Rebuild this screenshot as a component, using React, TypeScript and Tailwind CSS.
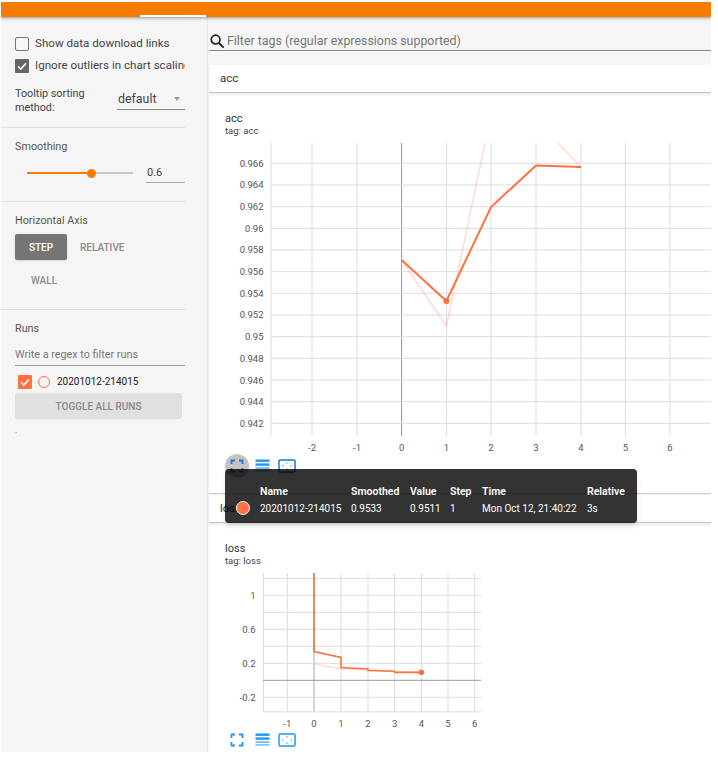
import React from 'react';

const RED = '#ff7043';

const CheckMark = () => (
  <svg viewBox="0 0 14 14" className="w-[14px] h-[14px]">
    <path d="M3 7.2 L5.8 10 L11 4.2" fill="none" stroke="#fff" strokeWidth="1.6" />
  </svg>
);

const SearchIcon = () => (
  <svg viewBox="0 0 16 16" className="w-[16px] h-[16px] shrink-0">
    <circle cx="6.6" cy="6.6" r="4.4" fill="none" stroke="#222" strokeWidth="1.7" />
    <path d="M10 10 L14.6 14.6" stroke="#222" strokeWidth="2" />
  </svg>
);

const ChartIcons = ({ hover }: { hover?: boolean }) => (
  <div className="flex items-center h-[24px] pl-[16px] gap-[6px]">
    <div className={`w-[24px] h-[24px] rounded-full flex items-center justify-center ${hover ? 'bg-[#c4c4c4]' : ''}`}>
      <svg viewBox="0 0 14 14" className="w-[14px] h-[14px]">
        <path d="M1.5 5 V1.5 H5 M9 1.5 H12.5 V5 M12.5 9 V12.5 H9 M5 12.5 H1.5 V9" fill="none" stroke={hover ? '#1976d2' : '#2196f3'} strokeWidth="1.8" />
      </svg>
    </div>
    <svg viewBox="0 0 15 14" className="w-[15px] h-[14px]">
      <rect x="0.5" y="0.5" width="14" height="2.4" fill="#2196f3" />
      <rect x="0.5" y="4.4" width="14" height="2.4" fill="#2196f3" />
      <rect x="0.5" y="8.3" width="14" height="1.6" fill="#64b5f6" />
      <rect x="0.5" y="11.2" width="14" height="1.4" fill="#64b5f6" />
    </svg>
    <svg viewBox="0 0 18 14" className="w-[18px] h-[14px] ml-[2px]">
      <rect x="1" y="1" width="16" height="12" rx="1" fill="none" stroke={hover ? '#1976d2' : '#2196f3'} strokeWidth="1.5" />
      <path d="M9 3.2 V4.6 M9 9.4 V10.8 M4 7 H5.4 M12.6 7 H14" stroke="#2196f3" strokeWidth="1.1" />
    </svg>
  </div>
);

const AccChart = () => {
  const xs = [
    [312, '-2'], [357, '-1'], [401.6, '0'], [446.4, '1'], [491, '2'],
    [536, '3'], [581, '4'], [625.5, '5'], [670, '6'],
  ] as [number, string][];
  const ys = ['0.966', '0.964', '0.962', '0.96', '0.958', '0.956', '0.954', '0.952', '0.95', '0.948', '0.946', '0.944', '0.942'];
  return (
    <svg viewBox="209 140 502 314" className="block w-[502px] h-[314px]">
      <line x1="271" y1="143" x2="271" y2="436" stroke="#ddd" />
      {xs.map(([x, t]) => (
        <g key={t}>
          <line x1={x} y1="143" x2={x} y2="436" stroke={t === '0' ? '#999' : '#ddd'} />
          <text x={x} y="451" fontSize="9.5" fill="#555" textAnchor="middle">{t}</text>
        </g>
      ))}
      {ys.map((t, i) => {
        const y = 163.3 + i * 21.67;
        return (
          <g key={t}>
            <line x1="271" y1={y} x2="711" y2={y} stroke="#ddd" />
            <text x="263.5" y={y + 3.5} fontSize="9.5" fill="#555" textAnchor="end">{t}</text>
          </g>
        );
      })}
      <polyline points="401.6,260 446.4,326 485,143" fill="none" stroke={RED} strokeOpacity="0.25" strokeWidth="1.5" />
      <polyline points="558,143 581,167" fill="none" stroke={RED} strokeOpacity="0.25" strokeWidth="1.5" />
      <polyline points="401.6,260 446.4,301 491,207 536,165.5 581,167" fill="none" stroke={RED} strokeWidth="2" />
      <circle cx="446.4" cy="301" r="3" fill={RED} />
    </svg>
  );
};

const LossChart = () => {
  const xs = [
    [287.3, '-1'], [314, '0'], [341, '1'], [368, '2'], [394.6, '3'],
    [421.4, '4'], [448, '5'], [474.7, '6'],
  ] as [number, string][];
  const ys = [578.3, 595.3, 612.3, 629.3, 646.3, 663.3, 697.3];
  const labels = [[595.3, '1'], [629.3, '0.6'], [663.3, '0.2'], [697.3, '-0.2']] as [number, string][];
  return (
    <svg viewBox="209 570 502 158" className="block w-[502px] h-[158px]">
      <line x1="263.5" y1="573" x2="263.5" y2="712" stroke="#ddd" />
      {xs.map(([x, t]) => (
        <g key={t}>
          <line x1={x} y1="573" x2={x} y2="712" stroke={t === '0' ? '#aaa' : '#ddd'} />
          <text x={x} y="726.5" fontSize="9.5" fill="#555" textAnchor="middle">{t}</text>
        </g>
      ))}
      {ys.map(y => (
        <line key={y} x1="263" y1={y} x2="481" y2={y} stroke="#ddd" />
      ))}
      <line x1="263" y1="680.3" x2="481" y2="680.3" stroke="#999" />
      <line x1="263" y1="711.8" x2="481" y2="711.8" stroke="#ddd" />
      {labels.map(([y, t]) => (
        <text key={t} x="255.5" y={y + 3.5} fontSize="9.5" fill="#555" textAnchor="end">{t}</text>
      ))}
      <polyline points="314,664 341,669 368,669.5 394.6,671.5 421.4,672.3" fill="none" stroke={RED} strokeOpacity="0.25" strokeWidth="1.5" />
      <polyline points="314,573 314,651.5 341,657.5 341,667.5 368,669 368,670.5 394.6,671.3 394.6,672.4 421.4,672.4" fill="none" stroke={RED} strokeWidth="1.6" />
      <circle cx="421.4" cy="672.3" r="2.8" fill={RED} />
    </svg>
  );
};

const Sidebar = () => (
  <aside className="w-[207px] shrink-0 pr-[22px] text-[10.8px] text-[#444] border-r border-[#e8e8e8] h-full">
    <div className="pl-[14px] pt-[16px]">
      <label className="flex items-center gap-[6px] h-[22px] text-[11.6px]">
        <span className="w-[14px] h-[14px] border border-[#777] rounded-[2px] shrink-0" />
        <span className="whitespace-nowrap">Show data download links</span>
      </label>
      <label className="flex items-center gap-[6px] h-[22px] overflow-hidden text-[11.6px]">
        <span className="w-[14px] h-[14px] bg-[#666] rounded-[1px] shrink-0 flex items-center justify-center"><CheckMark /></span>
        <span className="whitespace-nowrap">Ignore outliers in chart scaling</span>
      </label>
      <div className="flex mt-[9px] h-[41px]">
        <div className="w-[102px] leading-[14px] pt-px">Tooltip sorting<br />method:</div>
        <div className="flex-1 h-[24px] border-b border-[#888] flex items-center justify-between pl-px pr-[5px] pt-[3px] text-[12.4px]">
          <span>default</span>
          <span className="w-0 h-0 border-x-[3.5px] border-x-transparent border-t-[4px] border-t-[#999]" />
        </div>
      </div>
    </div>
    <div className="h-px bg-[#ddd]" />
    <div className="pl-[14px] pt-[11px] h-[73px]">
      <div className="text-[#555] leading-[15px]">Smoothing</div>
      <div className="flex items-center mt-[9px]">
        <div className="w-[106px] ml-[12px] h-[2px] bg-[#c8c8c8] relative">
          <div className="w-[64px] h-[2px] bg-[#f57c00]" />
          <div className="absolute left-[59.5px] -top-[3.5px] w-[9px] h-[9px] rounded-full bg-[#f57c00]" />
        </div>
        <div className="ml-[13px] flex-1 h-[20px] border-b border-[#aaa] pl-px leading-[19px] text-[11px]">0.6</div>
      </div>
    </div>
    <div className="h-px bg-[#ddd]" />
    <div className="pl-[14px] pt-[11px] h-[107px]">
      <div className="text-[#555] leading-[15px]">Horizontal Axis</div>
      <div className="flex items-center mt-[6px] text-[10px] font-medium">
        <div className="w-[52px] h-[26px] bg-[#757575] text-white rounded-[2px] flex items-center justify-center shadow-sm">STEP</div>
        <div className="ml-[13px] text-[#8a8a8a]">RELATIVE</div>
      </div>
      <div className="mt-[14px] ml-[16px] text-[10px] font-medium text-[#8a8a8a] leading-[14px]">WALL</div>
    </div>
    <div className="h-px bg-[#ddd]" />
    <div className="pl-[14px] pt-[11px]">
      <div className="text-[#555] leading-[15px]">Runs</div>
      <div className="mt-[7px] h-[23px] border-b border-[#999] text-[#777] leading-[23px]">Write a regex to filter runs</div>
      <div className="flex items-start h-[27px] pt-[9px] pl-[3px]">
        <span className="w-[14px] h-[14px] bg-[#ff7043] rounded-[1px] flex items-center justify-center"><CheckMark /></span>
        <span className="w-[12px] h-[12px] rounded-full border-[1.5px] border-[#ff7043] ml-[6px] mt-px" />
        <span className="ml-[7px] text-[10px] text-[#222] leading-[14px]">20201012-214015</span>
      </div>
      <div className="w-[167px] h-[26px] bg-[#e0e0e0] rounded-[2px] flex items-center justify-center text-[10px] font-medium text-[#8a8a8a]">TOGGLE ALL RUNS</div>
      <div className="text-[9px] text-[#777] mt-[5px] leading-[12px]">.</div>
    </div>
  </aside>
);

export default function App() {
  return (
    <div className="w-[718px] h-[764px] bg-white pt-[2px] pl-[1px] overflow-hidden font-['Roboto',sans-serif]">
      <div className="w-[710px] h-[750px] bg-[#f5f5f5] flex flex-col relative overflow-hidden">
        <header className="h-[15px] bg-[#f57c00] shrink-0 flex items-end pl-[139px] shadow-[0_1px_3px_rgba(0,0,0,0.4)] relative z-10">
          <div className="w-[66px] h-[2px] bg-white" />
        </header>
        <div className="flex flex-1 min-h-0">
          <Sidebar />
          <main className="flex-1 min-w-0">
            <div className="h-[20px] mt-[14px] ml-[1px] flex items-center border-b border-[#888] text-[12.4px] text-[#777] gap-[2px] pt-px whitespace-nowrap">
              <SearchIcon />
              <span>Filter tags (regular expressions supported)</span>
            </div>
            <div className="h-[27px] mt-[14px] ml-[1px] bg-white shadow-[0_1px_1px_rgba(0,0,0,0.2)] pl-[11px] text-[11.5px] text-[#333] leading-[27px]">acc</div>
            <div className="h-[397px] mt-[4px] ml-[1px] bg-white shadow-[0_1px_1px_rgba(0,0,0,0.15)]">
              <div className="pl-[16px] pt-[16px] h-[44px]">
                <div className="text-[11px] text-[#333] leading-[13px]">acc</div>
                <div className="text-[9.5px] text-[#444] leading-[11px]">tag: acc</div>
              </div>
              <AccChart />
              <ChartIcons hover />
            </div>
            <div className="h-[27px] mt-[2px] ml-[1px] bg-white shadow-[0_1px_1px_rgba(0,0,0,0.2)] pl-[11px] text-[11.5px] text-[#333] leading-[27px]">loss</div>
            <div className="h-[226px] mt-[4px] ml-[1px] bg-white">
              <div className="pl-[16px] pt-[16px] h-[44px]">
                <div className="text-[11px] text-[#333] leading-[13px]">loss</div>
                <div className="text-[9.5px] text-[#444] leading-[11px]">tag: loss</div>
              </div>
              <LossChart />
              <ChartIcons />
            </div>
          </main>
        </div>
        <div className="absolute left-[224px] top-[467px] w-[412px] h-[54px] bg-black/80 rounded-[4px] shadow-md text-white z-20 pl-[35px] pt-[14px]">
          <div className="grid grid-cols-[91px_59px_40px_32px_105px_1fr] leading-[17px] font-semibold text-[10.5px]">
            <span>Name</span><span>Smoothed</span><span>Value</span><span>Step</span><span>Time</span><span>Relative</span>
          </div>
          <div className="grid grid-cols-[91px_59px_40px_32px_105px_1fr] leading-[17px] whitespace-nowrap text-[10px]">
            <span>20201012-214015</span><span>0.9533</span><span>0.9511</span><span>1</span><span>Mon Oct 12, 21:40:22</span><span>3s</span>
          </div>
          <span className="absolute left-[11px] top-[32px] w-[14px] h-[14px] rounded-full bg-[#ff7043] border border-white" />
        </div>
      </div>
    </div>
  );
}
